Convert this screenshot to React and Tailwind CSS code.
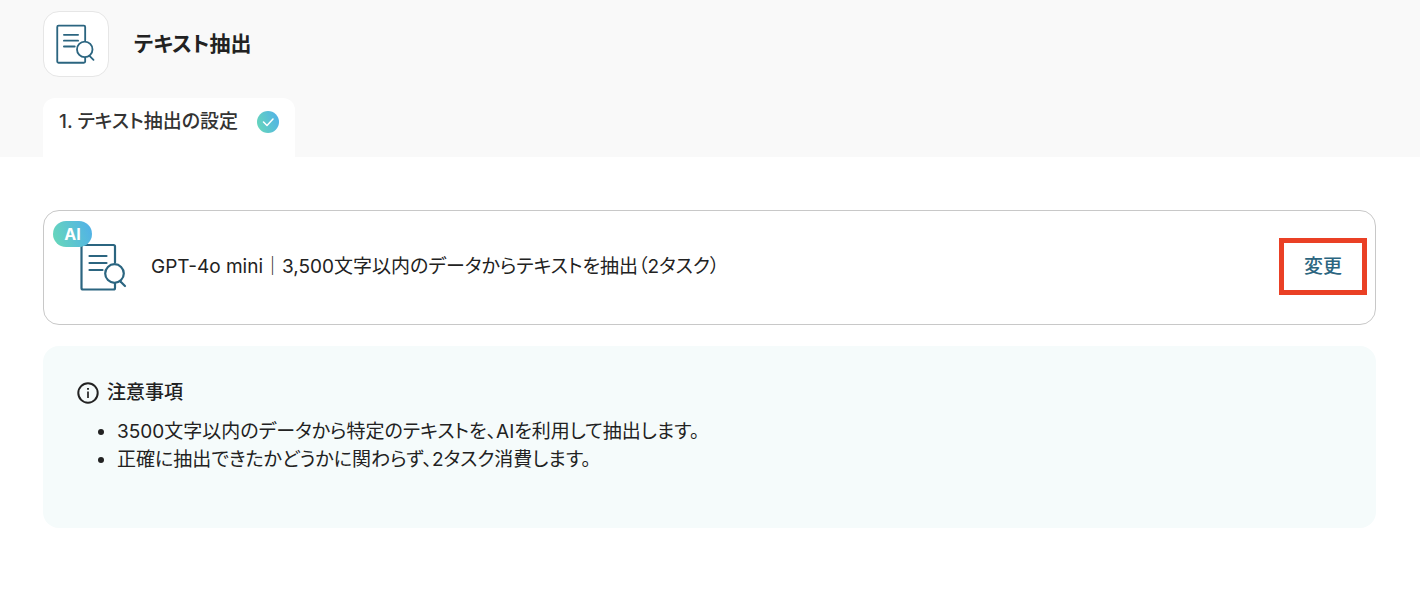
const notes = [
    '3500文字以内のデータから特定のテキストを、AIを利用して抽出します。',
    '正確に抽出できたかどうかに関わらず、2タスク消費します。',
];

function DocSearchIcon({ className }) {
    return (
        <svg className={className} viewBox="0 0 48 48" fill="none" stroke="#2b6580" strokeWidth="2.2" strokeLinecap="round" strokeLinejoin="round" aria-hidden="true">
            <path d="M35 19.500V3.500A1.500 1.500 0 0 0 33.500 2H3A1.500 1.500 0 0 0 1.500 3.500V45A1.500 1.500 0 0 0 3 46.500H33.500A1.500 1.500 0 0 0 35 45V40.500" />
            <path d="M9.500 13H26.500M9.500 20H26.500M9.500 27H22.500" />
            <circle cx="34.500" cy="30.500" r="9.300" />
            <path d="M40.500 38.500L45 43" />
        </svg>
    );
}

function CheckBadge() {
    return (
        <span className="w-[22px] h-[22px] rounded-full bg-linear-[70deg] from-[#68d9b8] to-[#50afea] flex items-center justify-center">
            <svg className="w-3 h-3" viewBox="0 0 12 12" fill="none" stroke="white" strokeWidth="1.500" strokeLinecap="round" strokeLinejoin="round" aria-hidden="true">
                <path d="M1.500 6L5 9.500L11 3" />
            </svg>
        </span>
    );
}

function InfoIcon() {
    return (
        <svg className="w-[22px] h-[22px]" viewBox="0 0 22 22" fill="none" stroke="#222222" strokeWidth="2" aria-hidden="true">
            <circle cx="11" cy="11" r="9.700" />
            <path d="M11 9.500V16" strokeWidth="1.700" />
            <path d="M11 6V7.800" strokeWidth="1.900" />
        </svg>
    );
}

function App() {
    return (
        <div className="min-h-screen bg-white text-[#222222] text-[19px] leading-7 font-['Inter','Noto_Sans_CJK_JP',sans-serif] [font-feature-settings:'palt']" lang="ja">
            <header className="bg-[#f9f9f9] pl-[43px] pr-11 pt-[11px]">
                <div className="flex items-center gap-[25px]">
                    <div className="w-[66px] h-[66px] bg-white border border-[#e6e6e6] rounded-2xl flex items-center justify-center">
                        <DocSearchIcon className="w-10 h-10" />
                    </div>
                    <h1 className="text-[21px] font-bold">テキスト抽出</h1>
                </div>
                <nav className="flex mt-[21px]">
                    <button type="button" className="min-w-[252px] h-[59px] px-4 pb-3 bg-white rounded-t-xl flex items-center justify-between gap-4 font-medium text-[#333333]">
                        1. テキスト抽出の設定
                        <CheckBadge />
                    </button>
                </nav>
            </header>

            <main className="pl-[43px] pr-11 pt-[53px] pb-8">
                {/* selected action */}
                <section className="relative border border-[#c8c8c8] rounded-2xl pl-9 pr-2 pt-[27px] pb-[29px] flex items-center gap-[23px]">
                    <DocSearchIcon className="w-12 h-12 shrink-0" />
                    <span className="absolute left-[9px] top-[10px] w-[39px] h-[26px] rounded-full bg-linear-[70deg] from-[#68d9b8] to-[#50afea] text-white text-base font-bold flex items-center justify-center">
                        AI
                    </span>
                    <p className="flex-1">GPT-4o mini｜3,500文字以内のデータからテキストを抽出（2タスク）</p>
                    <button type="button" className="border-5 border-[#ea4025] px-5 h-[57px] font-medium text-[#2b6580]">変更</button>
                </section>

                {/* notes */}
                <section className="mt-[21px] bg-[#f5fbfb] rounded-2xl pl-[34px] pr-8 pt-[33px] pb-[54px]">
                    <h2 className="flex items-center gap-2 font-medium">
                        <InfoIcon />
                        注意事項
                    </h2>
                    <ul className="mt-[11px] pl-10 list-disc">
                        {notes.map((note) => (
                            <li key={note}>{note}</li>
                        ))}
                    </ul>
                </section>
            </main>
        </div>
    );
}

export default App;
